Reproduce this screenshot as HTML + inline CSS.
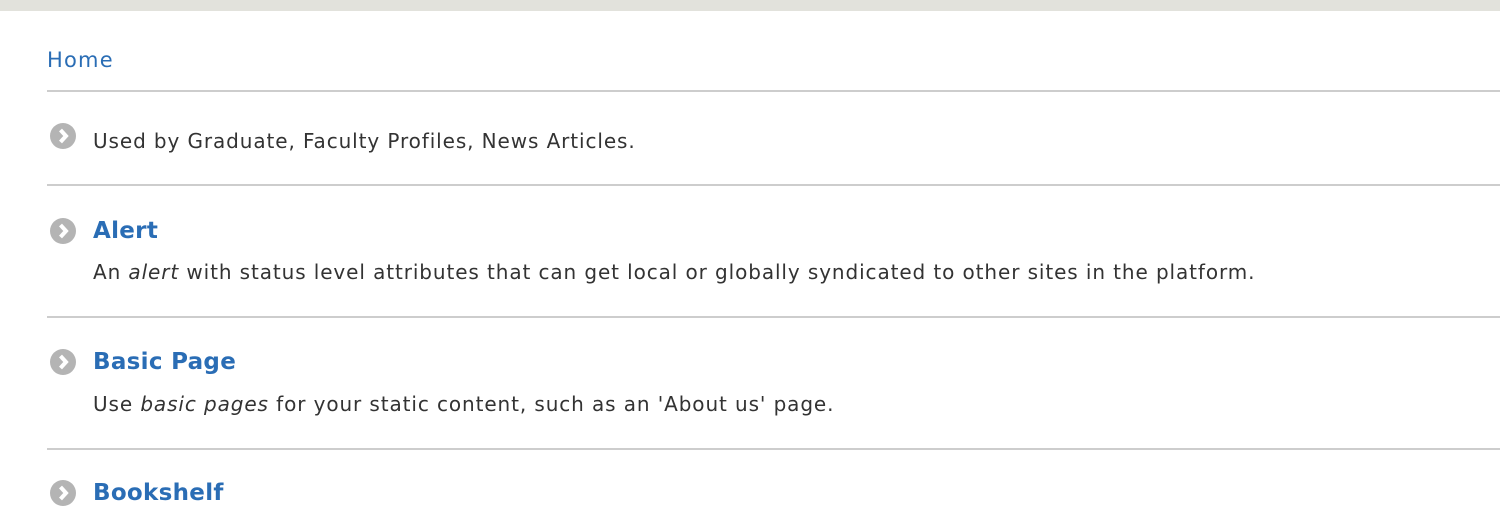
<!DOCTYPE html>
<html><head><style>
body{margin:0;width:1500px;height:500px;overflow:hidden;background:#fff;font-family:"DejaVu Sans","Liberation Sans",sans-serif;color:#333;}
.top{position:absolute;left:0;top:0;width:1500px;height:11px;background:#e2e2dc;}
.a{position:absolute;white-space:nowrap;}
.line{position:absolute;left:47px;right:0;height:2px;background:#cdcdcd;}
.home{left:47px;top:48px;font-size:21px;color:#2a6db5;letter-spacing:1.2px;}
.t{left:93px;font-size:23px;font-weight:bold;color:#2a6db5;letter-spacing:0.3px;}
.d{left:93px;font-size:20px;color:#333;letter-spacing:0.9px;}
.ic{position:absolute;left:50px;width:26px;height:26px;border-radius:50%;background:#b4b4b4;}
.ic svg{position:absolute;left:0;top:0}
</style></head><body>
<div class="top"></div>
<div class="a home">Home</div>
<div class="line" style="top:90px"></div>
<div class="ic" style="top:123px"><svg width="26" height="26"><path d="M10.5 7 L16 13 L10.5 19" stroke="#fff" stroke-width="4" fill="none"/></svg></div>
<div class="a d" style="top:129px">Used by Graduate, Faculty Profiles, News Articles.</div>
<div class="line" style="top:184px"></div>
<div class="ic" style="top:218px"><svg width="26" height="26"><path d="M10.5 7 L16 13 L10.5 19" stroke="#fff" stroke-width="4" fill="none"/></svg></div>
<div class="a t" style="top:218px">Alert</div>
<div class="a d" style="top:260px">An <i>alert</i> with status level attributes that can get local or globally syndicated to other sites in the platform.</div>
<div class="line" style="top:316px"></div>
<div class="ic" style="top:349px"><svg width="26" height="26"><path d="M10.5 7 L16 13 L10.5 19" stroke="#fff" stroke-width="4" fill="none"/></svg></div>
<div class="a t" style="top:349px">Basic Page</div>
<div class="a d" style="top:392px">Use <i>basic pages</i> for your static content, such as an 'About us' page.</div>
<div class="line" style="top:448px"></div>
<div class="ic" style="top:480px"><svg width="26" height="26"><path d="M10.5 7 L16 13 L10.5 19" stroke="#fff" stroke-width="4" fill="none"/></svg></div>
<div class="a t" style="top:480px">Bookshelf</div>
</body></html>
